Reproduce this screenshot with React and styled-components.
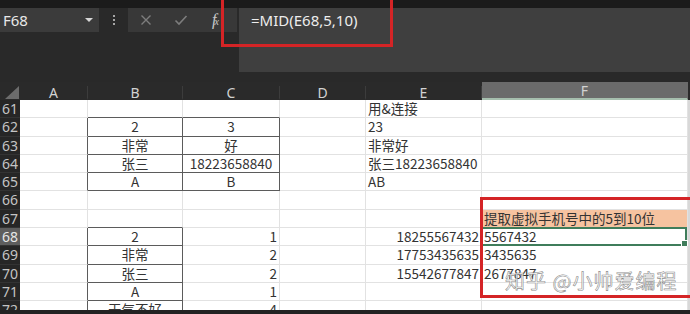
import React from 'react'
import styled, { createGlobalStyle } from 'styled-components'

const GlobalStyle = createGlobalStyle`
  html, body {
    margin: 0;
    padding: 0;
    background: #262626;
  }
  body {
    width: 690px;
    height: 314px;
    overflow: hidden;
    font-family: "Noto Sans CJK SC", "Noto Sans", sans-serif;
  }
`

const COLS = '20px 68px 95px 97px 86px 116px 206px 2px'
const GRID_LINE = '#e2e2e2'
const TABLE_LINE = '#5b5b5b'

const Screen = styled.div`
  position: relative;
  width: 690px;
  height: 314px;
  display: flex;
  flex-direction: column;
  background: #292929;
  overflow: hidden;
`

const TopBand = styled.div`
  flex: none;
  height: 8px;
  background: #1b1b1b;
`

const Toolbar = styled.div`
  flex: none;
  display: flex;
  height: 74px;
  background: #292929;
`

const LeftTools = styled.div`
  flex: none;
  width: 238px;
  display: flex;
  align-items: flex-start;
`

const NameBox = styled.div`
  width: 99px;
  height: 24px;
  box-sizing: border-box;
  padding: 0 6px 0 3px;
  background: #3b3b3b;
  display: flex;
  align-items: center;
  justify-content: space-between;
  color: #e8e8e8;
  font-family: "Noto Sans", sans-serif;
  font-size: 15px;
`

const Caret = styled.span`
  width: 0;
  height: 0;
  border-left: 4px solid transparent;
  border-right: 4px solid transparent;
  border-top: 4px solid #d6d6d6;
`

const DotsSlot = styled.div`
  width: 29px;
  height: 24px;
  display: flex;
  flex-direction: column;
  align-items: center;
  justify-content: center;
  gap: 2px;
`

const Dot = styled.span`
  width: 2px;
  height: 2px;
  border-radius: 1px;
  background: #cfcfcf;
`

const FuncBox = styled.div`
  width: 109px;
  height: 24px;
  background: #383838;
  display: flex;
  align-items: center;
  padding-left: 12px;
  box-sizing: border-box;
  gap: 22px;
`

const Fx = styled.span`
  font-family: "Liberation Serif", serif;
  font-style: italic;
  color: #c8c8c8;
  font-size: 16px;
  line-height: 1;
  margin-left: 2px;
  & small {
    font-size: 10px;
    margin-left: -2px;
  }
`

const FormulaBox = styled.div`
  flex: 1;
  height: 64px;
  background: #3f3f3f;
  color: #ededed;
  font-family: "Noto Sans", sans-serif;
  font-size: 15px;
  line-height: 24px;
  padding-left: 12px;
  box-sizing: border-box;
  margin-left: 1px;
`

const HeaderRow = styled.div`
  flex: none;
  display: grid;
  grid-template-columns: ${COLS};
  height: 18px;
  background: #2a2a2a;
`

const Corner = styled.div`
  display: flex;
  align-items: flex-end;
  justify-content: flex-end;
  padding: 0 1px 1px 0;
`

const CornerTri = styled.span`
  width: 0;
  height: 0;
  border-left: 14px solid transparent;
  border-bottom: 13px solid #6c6c6c;
`

const ColHead = styled.div`
  display: flex;
  align-items: center;
  justify-content: center;
  box-sizing: border-box;
  color: #d2d2d2;
  font-family: "Noto Sans", sans-serif;
  font-size: 14px;
  background: ${p => (p.$active ? '#6b6b6b' : 'transparent')};
  border-right: 1px solid ${p => (p.$active ? '#6b6b6b' : '#3c3c3c')};
  border-bottom: 2px solid ${p => (p.$active ? '#a6bfae' : 'transparent')};
  margin-top: ${p => (p.$active ? '0' : '4px')};
  height: ${p => (p.$active ? '18px' : '14px')};
`

const Sheet = styled.div`
  flex: none;
  height: 210px;
  overflow: hidden;
  display: grid;
  grid-template-columns: ${COLS};
  grid-auto-rows: 18.3px;
  background: #ffffff;
`

const RowHead = styled.div`
  background: ${p => (p.$active ? '#5e5e5e' : '#262626')};
  color: ${p => (p.$active ? '#e6e6e6' : '#c4c4c4')};
  font-family: "Noto Sans", sans-serif;
  font-size: 14px;
  line-height: 18px;
  text-align: right;
  padding-right: 2px;
  border-bottom: 1px solid #333;
  box-sizing: border-box;
  overflow: hidden;
`

const Cell = styled.div`
  position: relative;
  box-sizing: border-box;
  border-right: 1px solid ${p => p.$rc};
  border-bottom: 1px solid ${p => p.$bc};
  background: ${p => p.$fill || '#ffffff'};
  padding: 0 2px;
  color: #333333;
  font-size: 13.5px;
  line-height: 17px;
  white-space: nowrap;
  text-align: ${p => p.$align || 'left'};
`

const Selection = styled.div`
  position: absolute;
  inset: -1px 0 -1px -2px;
  border: 2px solid #3f7d5b;
  pointer-events: none;
`

const Handle = styled.span`
  position: absolute;
  right: -3px;
  bottom: -3px;
  width: 5px;
  height: 5px;
  background: #3f7d5b;
  border: 1px solid #fff;
`

const Edge = styled.div`
  background: #d8d8d8;
`

const BottomBand = styled.div`
  flex: 1;
  background: #222222;
`

const RedBox = styled.div`
  position: absolute;
  left: ${p => p.$x}px;
  top: ${p => p.$y}px;
  width: ${p => p.$w}px;
  height: ${p => p.$h}px;
  border: 3px solid #d42426;
  box-sizing: border-box;
  pointer-events: none;
`

const Watermark = styled.div`
  position: absolute;
  left: 505px;
  top: 266px;
  font-size: 20px;
  letter-spacing: 1px;
  color: rgba(255, 255, 255, 0.85);
  -webkit-text-stroke: 0.6px rgba(110, 110, 110, 0.8);
  pointer-events: none;
`

const LETTERS = ['A', 'B', 'C', 'D', 'E', 'F']

// values are numbers where the sheet keeps them as numbers (right aligned)
const ROWS = [
  { n: 61, E: '用&连接' },
  { n: 62, B: '2', C: '3', E: '23' },
  { n: 63, B: '非常', C: '好', E: '非常好' },
  { n: 64, B: '张三', C: '18223658840', E: '张三18223658840' },
  { n: 65, B: 'A', C: 'B', E: 'AB' },
  { n: 66 },
  { n: 67, F: '提取虚拟手机号中的5到10位' },
  { n: 68, B: '2', C: 1, E: 18255567432, F: '5567432' },
  { n: 69, B: '非常', C: 2, E: 17753435635, F: '3435635' },
  { n: 70, B: '张三', C: 2, E: 15542677847, F: '2677847' },
  { n: 71, B: 'A', C: 1 },
  { n: 72, B: '天气不好', C: 4 },
]

const inTable = (col, n) =>
  ((col === 'B' || col === 'C') && n >= 62 && n <= 65) ||
  (col === 'B' && n >= 68 && n <= 72)

const alignFor = (col, n, v) => {
  if (inTable(col, n)) return 'center'
  if (typeof v === 'number') return 'right'
  return 'left'
}

export default function App() {
  return (
    <>
      <GlobalStyle />
      <Screen>
        <TopBand />
        <Toolbar>
          <LeftTools>
            <NameBox>
              F68
              <Caret />
            </NameBox>
            <DotsSlot>
              <Dot />
              <Dot />
              <Dot />
            </DotsSlot>
            <FuncBox>
              <svg width="12" height="12" viewBox="0 0 12 12">
                <path d="M1.5 1.5 L10.5 10.5 M10.5 1.5 L1.5 10.5" stroke="#7d7d7d" strokeWidth="1.4" />
              </svg>
              <svg width="14" height="12" viewBox="0 0 14 12">
                <path d="M1.5 6.5 L5 10 L12.5 2" stroke="#7d7d7d" strokeWidth="1.6" fill="none" />
              </svg>
              <Fx>
                f<small>x</small>
              </Fx>
            </FuncBox>
          </LeftTools>
          <FormulaBox>=MID(E68,5,10)</FormulaBox>
        </Toolbar>

        <HeaderRow>
          <Corner>
            <CornerTri />
          </Corner>
          {LETTERS.map(l => (
            <ColHead key={l} $active={l === 'F'}>
              {l}
            </ColHead>
          ))}
          <div />
        </HeaderRow>

        <Sheet>
          {ROWS.map(row => (
            <React.Fragment key={row.n}>
              <RowHead $active={row.n === 68}>{row.n}</RowHead>
              {LETTERS.map((l, i) => {
                const next = LETTERS[i + 1]
                const dark = inTable(l, row.n)
                const rc = dark || (next && inTable(next, row.n)) ? TABLE_LINE : GRID_LINE
                const bc = dark || inTable(l, row.n + 1) ? TABLE_LINE : GRID_LINE
                const v = row[l]
                const fill = l === 'F' && row.n === 67 ? '#f6c3a0' : null
                return (
                  <Cell key={l} $rc={rc} $bc={bc} $fill={fill} $align={alignFor(l, row.n, v)}>
                    {v}
                    {l === 'F' && row.n === 68 && (
                      <Selection>
                        <Handle />
                      </Selection>
                    )}
                  </Cell>
                )
              })}
              <Edge />
            </React.Fragment>
          ))}
        </Sheet>
        <BottomBand />

        <RedBox $x={221} $y={-4} $w={172} $h={51} />
        <RedBox $x={480} $y={197} $w={213} $h={101} />
        <Watermark>知乎 @小帅爱编程</Watermark>
      </Screen>
    </>
  )
}
